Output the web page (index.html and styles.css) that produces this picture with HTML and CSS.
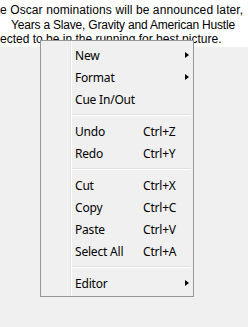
FILE: index.html
```html
<!DOCTYPE html>
<html>
<head>
<meta charset="utf-8">
<link rel="stylesheet" href="styles.css">
</head>
<body>
<div class="doc">
  <div class="line first">e Oscar nominations will be announced later,</div>
  <div class="line second">Years a Slave, Gravity and American Hustle</div>
  <div class="line">ected to be in the running for best picture.</div>
</div>
<div class="menu">
  <div class="item"><span class="label">New</span><span class="arrow"></span></div>
  <div class="item"><span class="label">Format</span><span class="arrow"></span></div>
  <div class="item"><span class="label">Cue In/Out</span></div>
  <div class="sep"></div>
  <div class="item"><span class="label">Undo</span><span class="key">Ctrl+Z</span></div>
  <div class="item"><span class="label">Redo</span><span class="key">Ctrl+Y</span></div>
  <div class="sep"></div>
  <div class="item"><span class="label">Cut</span><span class="key">Ctrl+X</span></div>
  <div class="item"><span class="label">Copy</span><span class="key">Ctrl+C</span></div>
  <div class="item"><span class="label">Paste</span><span class="key">Ctrl+V</span></div>
  <div class="item"><span class="label">Select All</span><span class="key">Ctrl+A</span></div>
  <div class="sep"></div>
  <div class="item"><span class="label">Editor</span><span class="arrow"></span></div>
</div>
</body>
</html>
```
FILE: styles.css
```css
html, body {
  margin: 0;
  padding: 0;
}
body {
  background: #f0f0f0;
  width: 248px;
  height: 327px;
  overflow: hidden;
}
.doc {
  background: #ffffff;
  height: 47px;
  padding-top: 3px;
  box-sizing: border-box;
  font-family: "Liberation Sans", Arial, sans-serif;
  font-size: 12px;
  line-height: 14.5px;
  color: #000;
  white-space: nowrap;
}
.line.first {
  letter-spacing: 0.1px;
}
.line.second {
  padding-left: 11px;
  letter-spacing: -0.2px;
}
.menu {
  position: absolute;
  left: 40px;
  top: 40px;
  width: 154px;
  box-sizing: border-box;
  border: 1px solid #979797;
  padding: 3px 0 2px 0;
  background: linear-gradient(to right, #f0f0f0 29px, #e2e3e3 29px, #e2e3e3 30px, #ffffff 30px, #ffffff 31px, #f0f0f0 31px);
  font-family: "Noto Sans", sans-serif;
  font-size: 12px;
  letter-spacing: -0.2px;
  color: #000;
}
.item {
  display: flex;
  align-items: center;
  height: 22px;
  box-sizing: border-box;
  padding: 2px 4px 0 34px;
  line-height: 20px;
}
.label {
  width: 68px;
  flex: none;
}
.key {
  flex: none;
}
.arrow {
  margin-left: auto;
  width: 0;
  height: 0;
  border-top: 3.5px solid transparent;
  border-bottom: 3.5px solid transparent;
  border-left: 4px solid #000;
  margin-top: -2px;
}
.sep {
  height: 10px;
  margin: 0 2px 0 31px;
  display: flex;
  flex-direction: column;
  justify-content: center;
}
.sep::before {
  content: "";
  display: block;
  height: 1px;
  background: #e0e0e0;
  border-bottom: 1px solid #ffffff;
}
```
